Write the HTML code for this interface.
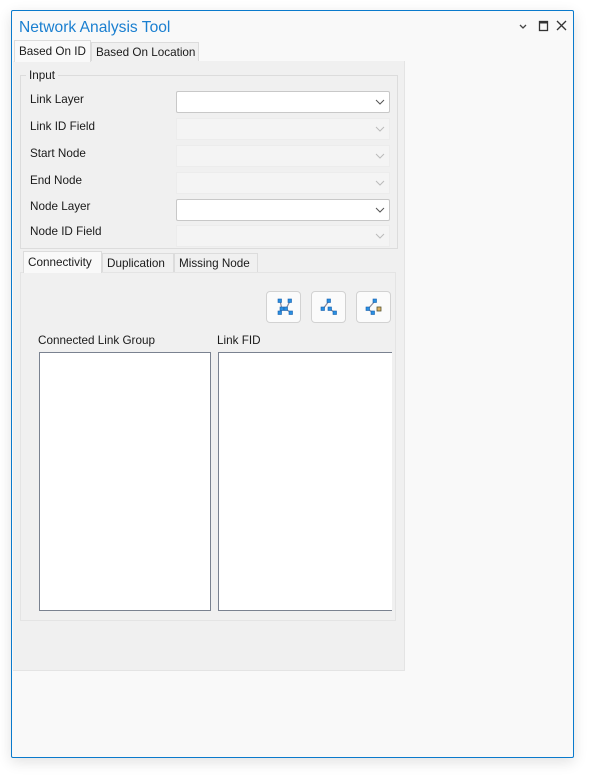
<!DOCTYPE html>
<html><head><style>
*{margin:0;padding:0;box-sizing:border-box}
body{width:609px;height:783px;background:#fff;font-family:"Liberation Sans",sans-serif;font-size:11.7px;color:#1a1a1a;position:relative;overflow:hidden}
.a{position:absolute}
.win{left:11px;top:10px;width:563px;height:748px;background:#f9f9f9;border:1px solid #0a7acc;border-radius:2px;box-shadow:0 4px 14px rgba(0,0,0,.12)}
.title{left:19px;top:19px;font-size:15.6px;color:#1a7fd0}
.panel{left:13px;top:61px;width:392px;height:610px;background:#f0f0f0;border-right:1px solid #e4e4e4;border-bottom:1px solid #e4e4e4}
.tab{height:21px;border:1px solid #dcdcdc;border-bottom:none;background:#f0f0f0;padding:4px 4px 0;white-space:nowrap}
.tab.sel{background:#f9f9f9}
.grp{left:20px;top:75px;width:378px;height:174px;border:1px solid #dcdcdc}
.lbl{left:30px;margin-top:2px}
.cb{left:176px;width:214px;height:22px;background:#f4f4f4;border:1px solid #ececec}
.cb.en{background:#fff;border:1px solid #c8c8c8;border-radius:2px}
.cb svg{position:absolute;right:4px;top:7px}
.inner{left:20px;top:272px;width:376px;height:349px;border:1px solid #e4e4e4;background:#f0f0f0}
.btn{top:291px;width:35px;height:32px;border:1px solid #d2d2d2;border-radius:4px;background:#fbfbfb}
.lst{top:352px;height:259px;background:#fff;border:1px solid #7a8290}
</style></head><body>
<div class="a win"></div>
<div class="a title">Network Analysis Tool</div>
<svg class="a" style="left:518px;top:20px" width="50" height="14">
<path d="M2 5l3 3 3-3" stroke="#444" fill="none" stroke-width="1.3"/>
<rect x="21.5" y="1.5" width="8" height="9" stroke="#333" fill="none" stroke-width="1.3"/><rect x="21" y="1" width="9" height="2.5" fill="#333"/>
<path d="M39 1l9 9M48 1l-9 9" stroke="#333" stroke-width="1.3"/>
</svg>
<div class="a panel"></div>
<div class="a tab sel" style="left:14px;top:40px;width:77px;height:22px">Based On ID</div>
<div class="a tab" style="left:91px;top:42px;width:108px;height:19px;padding-top:3px">Based On Location</div>
<div class="a grp"></div>
<div class="a" style="left:26px;top:69px;background:#f0f0f0;padding:0 3px">Input</div>
<div class="a lbl" style="top:91px">Link Layer</div>
<div class="a lbl" style="top:118px">Link ID Field</div>
<div class="a lbl" style="top:145px">Start Node</div>
<div class="a lbl" style="top:172px">End Node</div>
<div class="a lbl" style="top:198px">Node Layer</div>
<div class="a lbl" style="top:223px">Node ID Field</div>
<div class="a cb en" style="top:91px"><svg width="10" height="6"><path d="M1 1l4 4 4-4" stroke="#555" fill="none"/></svg></div>
<div class="a cb" style="top:118px"><svg width="10" height="6"><path d="M1 1l4 4 4-4" stroke="#bbb" fill="none"/></svg></div>
<div class="a cb" style="top:145px"><svg width="10" height="6"><path d="M1 1l4 4 4-4" stroke="#bbb" fill="none"/></svg></div>
<div class="a cb" style="top:172px"><svg width="10" height="6"><path d="M1 1l4 4 4-4" stroke="#bbb" fill="none"/></svg></div>
<div class="a cb en" style="top:199px"><svg width="10" height="6"><path d="M1 1l4 4 4-4" stroke="#555" fill="none"/></svg></div>
<div class="a cb" style="top:225px"><svg width="10" height="6"><path d="M1 1l4 4 4-4" stroke="#bbb" fill="none"/></svg></div>
<div class="a inner"></div>
<div class="a tab sel" style="left:23px;top:251px;width:79px;height:22px">Connectivity</div>
<div class="a tab" style="left:102px;top:253px;width:72px;height:19px;padding-top:3px">Duplication</div>
<div class="a tab" style="left:174px;top:253px;width:84px;height:19px;padding-top:3px">Missing Node</div>
<div class="a btn" style="left:266px"></div>
<div class="a btn" style="left:311px"></div>
<div class="a btn" style="left:356px"></div>
<svg class="a" style="left:0;top:0" width="609" height="400">
<g stroke="#8a8a9a" stroke-width="1.2" fill="none">
<path d="M280 301L282 309L280 313M290 301L286 309L291 313"/>
<path d="M323 309L329 301M330 309L335 313"/>
<path d="M368 309L375 301M368 309L373 313"/>
</g>
<g fill="#2a8fe0" stroke="#1560b0" stroke-width=".6">
<rect x="278" y="299" width="3.5" height="3.5"/><rect x="288" y="299" width="3.5" height="3.5"/>
<rect x="280" y="307" width="3.5" height="3.5"/><rect x="284" y="307" width="3.5" height="3.5"/>
<rect x="278" y="311" width="3.5" height="3.5"/><rect x="289" y="311" width="3.5" height="3.5"/>
<rect x="327" y="299" width="3.5" height="3.5"/><rect x="321" y="307" width="3.5" height="3.5"/>
<rect x="328" y="307" width="3.5" height="3.5"/><rect x="333" y="311" width="3.5" height="3.5"/>
<rect x="373" y="299" width="3.5" height="3.5"/><rect x="366" y="307" width="3.5" height="3.5"/>
<rect x="371" y="311" width="3.5" height="3.5"/>
</g>
<rect x="377" y="307" width="4" height="4" fill="#e0b060" stroke="#553" stroke-width=".8"/>
</svg>
<div class="a" style="left:38px;top:334px">Connected Link Group</div>
<div class="a" style="left:217px;top:334px">Link FID</div>
<div class="a lst" style="left:39px;width:172px"></div>
<div class="a lst" style="left:218px;width:174px;border-right:none"></div>
</body></html>
